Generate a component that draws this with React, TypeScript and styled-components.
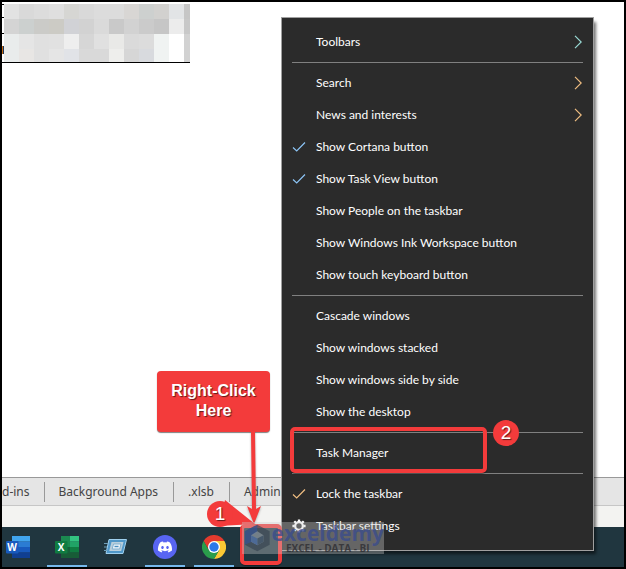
import React from "react";
import styled, { createGlobalStyle } from "styled-components";

const GlobalStyle = createGlobalStyle`
  *, *::before, *::after { box-sizing: border-box; }
  body { margin: 0; font-family: "Noto Sans", "Open Sans", sans-serif; background: #000; }
  button { font: inherit; color: inherit; border: 0; background: none; padding: 0; margin: 0; cursor: default; }
`;

const RED = "#f33b3b";

const Screen = styled.div`
  position: relative;
  display: flex;
  flex-direction: column;
  min-height: 100vh;
  border: 2px solid #000;
  background: #fff;
  overflow: hidden;
`;

const Sheet = styled.main`
  flex: 1;
  padding: 2px 0 0 0;
`;

const Cells = styled.div`
  display: flex;
  align-items: flex-end;
  width: 188px;
  border-bottom: 1px solid #000;
`;

const RowEdge = styled.div`
  width: 2px;
  height: 58px;
  padding-top: 42px;
  background: linear-gradient(#000, #000) 0 0 / 2px 1px no-repeat,
    linear-gradient(#000, #000) 0 13px / 2px 1px no-repeat,
    linear-gradient(#000, #000) 0 29px / 2px 1px no-repeat, #fff;
`;

const CellMark = styled.div`
  height: 8px;
  background: #c56a12;
  border-right: 1px solid #1d3557;
`;

const Mosaic = styled.div`
  display: grid;
  grid-template-columns: repeat(12, 15px) 6px;
  grid-template-rows: 15px 15px 15px 13px;
`;

const Pixel = styled.span<{ $tone: string }>`
  background: ${(p) => p.$tone};
`;

const SheetTabs = styled.nav`
  display: flex;
  align-items: center;
  height: 29px;
  border-top: 1px solid #999;
  border-bottom: 1px solid #c6c6c6;
  background: #e5e5e5;
  overflow: hidden;
`;

const SheetTab = styled.button<{ $cut?: boolean }>`
  height: 20px;
  padding: ${(p) => (p.$cut ? "0 14px 0 0" : "0 15px 0 14px")};
  border-right: 1px solid #999;
  color: #444;
  font-size: 12px;
  line-height: 16px;
  white-space: nowrap;
`;

const StatusBar = styled.div`
  height: 21px;
  background: #f3f3f1;
`;

const Taskbar = styled.footer`
  display: flex;
  gap: 1px;
  height: 40px;
  margin-left: -8px;
  background: #20363f;
`;

const TaskButton = styled.button<{ $open?: boolean }>`
  display: flex;
  align-items: center;
  justify-content: center;
  width: 48px;
  height: 40px;
  background: ${(p) =>
    p.$open ? "linear-gradient(#76b9ed, #76b9ed) 50% 100% / 40px 2px no-repeat" : "none"};
`;

const Menu = styled.div`
  position: absolute;
  left: 279px;
  bottom: 16px;
  width: 313px;
  padding: 8px 0;
  border: 1px solid #a0a0a0;
  background: #2b2b2b;
  box-shadow: 3px 4px 3px -1px rgba(0, 0, 0, 0.55);
  color: #fff;
  font-family: Lato, "Open Sans", sans-serif;
`;

const MenuItem = styled.button`
  display: grid;
  grid-template-columns: 34px 1fr 20px;
  align-items: center;
  width: 100%;
  height: 32px;
  font-size: 12px;
  line-height: 16px;
  text-align: left;
  white-space: nowrap;
`;

const IconSlot = styled.span`
  display: flex;
  padding-left: 10px;
`;

const Divider = styled.hr`
  height: 1px;
  margin: 4px 10px;
  border: 0;
  background: #808080;
`;

const Highlight = styled.div<{ $x: number; $bottom: number; $w: number; $h: number }>`
  position: absolute;
  left: ${(p) => p.$x}px;
  bottom: ${(p) => p.$bottom}px;
  width: ${(p) => p.$w}px;
  height: ${(p) => p.$h}px;
  border: 4px solid ${RED};
  border-radius: 5px;
  box-shadow: 0 1px 1px rgba(0, 0, 0, 0.4);
  pointer-events: none;
`;

const Callout = styled.div`
  position: absolute;
  left: 155px;
  bottom: 135px;
  width: 113px;
  padding: 10px 0 11px;
  border-radius: 4px;
  background: ${RED};
  box-shadow: 0 1px 1px rgba(0, 0, 0, 0.5);
  color: #fff;
  font: bold 16px/20px "Liberation Sans", Arial, sans-serif;
  text-align: center;
  text-shadow: 1px 1px 1px rgba(0, 0, 0, 0.6);
`;

const Arrow = styled.svg`
  position: absolute;
  left: 243px;
  bottom: 42px;
  filter: drop-shadow(0 1px 1px rgba(0, 0, 0, 0.3));
`;

const PinTail = styled.svg`
  position: absolute;
  left: 205px;
  bottom: 39px;
`;

const Step = styled.div<{ $x: number; $bottom: number }>`
  position: absolute;
  left: ${(p) => p.$x}px;
  bottom: ${(p) => p.$bottom}px;
  width: 26px;
  height: 26px;
  border-radius: 50%;
  background: ${RED};
  color: #fff;
  font: 19px/26px "Liberation Sans", Arial, sans-serif;
  text-align: center;
  text-shadow: 1px 1px 1px rgba(0, 0, 0, 0.6);
`;

const Watermark = styled.div`
  position: absolute;
  left: 240px;
  bottom: 13px;
  display: flex;
  align-items: center;
  width: 142px;
  height: 32px;
  padding-left: 1px;
  background: rgba(205, 205, 205, 0.36);
  pointer-events: none;
`;

const WatermarkText = styled.div`
  display: flex;
  flex-direction: column;
  align-items: center;
  flex: 1;
`;

const BrandName = styled.span`
  color: rgba(58, 76, 140, 0.8);
  font: 700 21px/20px "Open Sans", sans-serif;
`;

const BrandTag = styled.span`
  color: rgba(45, 45, 50, 0.8);
  font: 700 10px/10px "Open Sans", sans-serif;
  white-space: nowrap;
`;

const tones = [
  "#e2e2e2", "#d9d9d9", "#dcdcdc", "#dfdfdf", "#d6d6d3", "#d9d9d9", "#dcdcdc", "#dcdcdc", "#d8d6d4", "#cdd0cf", "#d2d1cf", "#e2e4e6", "#c6c6c6",
  "#d4d4d4", "#ccd0cf", "#cbcbc8", "#cccbc5", "#d1d2d6", "#d2d2d2", "#dadada", "#c9c9c9", "#d2d2d2", "#cbcbcb", "#c6c6c6", "#ececec", "#c8c8c8",
  "#e9ecec", "#e5e5e5", "#e0e0e0", "#e1e1e1", "#eeeeee", "#d6d6d6", "#e0e0e0", "#e9e9e7", "#dadada", "#dcdcdc", "#f0f3f2", "#ffffff", "#d2d2d2",
  "#e9ecec", "#e8e6e4", "#e0e0e0", "#e5e5e5", "#e1e3e7", "#d9d9d9", "#d9d9d9", "#eeeeec", "#d6d6d6", "#d8dade", "#f0f3f2", "#ffffff", "#d2d2d2",
];

const Check = ({ tint }: { tint: string }) => (
  <svg width="14" height="14" viewBox="0 0 14 14" fill="none" aria-hidden="true">
    <path d="M1 7.5 4.7 11 13 2.5" stroke={tint} strokeWidth="1.2" />
  </svg>
);

const Chevron = ({ tint }: { tint: string }) => (
  <svg width="9" height="14" viewBox="0 0 9 14" fill="none" aria-hidden="true">
    <path d="M2 .8 8.200 7 2 13.200" stroke={tint} strokeWidth="1.2" />
  </svg>
);

const Gear = () => (
  <svg width="14" height="14" viewBox="0 0 14 14" fill="none" stroke="#fff" aria-hidden="true">
    <circle cx="7" cy="7" r="3.800" strokeWidth="2.2" />
    <path
      d="M7 .4v2.400M7 11.200v2.400M.4 7h2.400M11.200 7h2.400M2.300 2.300 4 4M10 10l1.700 1.700M2.300 11.700 4 10M10 4l1.700-1.700"
      strokeWidth="2.300"
    />
  </svg>
);

const OfficeIcon = ({ letter, bands, tile }: { letter: string; bands: string[]; tile: string }) => (
  <svg width="24" height="22" viewBox="0 0 24 22" aria-hidden="true">
    {bands.map((c, i) => (
      <rect key={c} x="6" y={i * 5.5} width="18" height="5.6" fill={c} />
    ))}
    {letter === "X" && <path d="M6 0h9v5.5H6zM6 5.5h9V11H6z" fill="#1b8a50" />}
    {letter === "X" && <path d="M6 11h9v5.5H6z" fill="#14623a" />}
    <rect y="5" width="12.5" height="12.5" rx="1" fill={tile} />
    <text
      x="6.2"
      y="15"
      fill="#fff"
      fontFamily="Open Sans, sans-serif"
      fontSize="10"
      fontWeight="700"
      textAnchor="middle"
    >
      {letter}
    </text>
  </svg>
);

const RunIcon = () => (
  <svg width="24" height="18" viewBox="0 0 24 18" fill="none" aria-hidden="true">
    <path d="M5 1.500H22.500l-3.500 14H2z" fill="#4f97c8" stroke="#9fd0ee" />
    <path d="M7.500 4h12l-2.300 9h-12z" fill="#b9cfdc" />
    <path d="M9.500 6h7.500l-1.300 5H8.200z" fill="#eef6fb" stroke="#7fb0d0" />
    <path d="M10.500 8.500h4" stroke="#4a8fbe" strokeWidth="1.400" />
    <path d="M0 5.500h4M0 9h3M0 12.500h3" stroke="#6f9fb8" />
  </svg>
);

const DiscordIcon = () => (
  <svg width="24" height="24" viewBox="0 0 24 24" aria-hidden="true">
    <circle cx="12" cy="12" r="12" fill="#5865f2" />
    <path
      d="M16.9 7.4A12 12 0 0 0 14 6.5l-.5.9a11 11 0 0 0-3 0L10 6.5a12 12 0 0 0-2.9.9C5.2 10.200 4.700 12.900 5 15.600a11 11 0 0 0 3.500 1.800l.8-1.300-1.200-.6.3-.2a8.600 8.600 0 0 0 7.200 0l.3.2-1.200.6.8 1.300a11 11 0 0 0 3.500-1.800c.3-3.100-.5-5.800-2.100-8.200ZM9.500 13.900c-.8 0-1.300-.7-1.300-1.500s.6-1.500 1.300-1.500 1.400.7 1.300 1.500c0 .8-.6 1.500-1.300 1.500Zm5 0c-.7 0-1.300-.7-1.300-1.500s.6-1.500 1.300-1.500 1.400.7 1.300 1.500c0 .8-.6 1.500-1.300 1.500Z"
      fill="#fff"
    />
  </svg>
);

const ChromeIcon = () => (
  <svg width="24" height="24" viewBox="0 0 24 24" aria-hidden="true">
    <path d="M12 6h10.400A12 12 0 0 0 1.600 6l5.200 9z" fill="#e33b2e" />
    <path d="M17.200 15 12 24A12 12 0 0 0 22.400 6H12z" fill="#fcc934" />
    <path d="M6.800 15 1.600 6A12 12 0 0 0 12 24l5.200-9z" fill="#2a9d4b" />
    <circle cx="12" cy="12" r="6" fill="#fff" />
    <circle cx="12" cy="12" r="4.700" fill="#2b78e8" />
  </svg>
);

const CubeLogo = () => (
  <svg width="30" height="30" viewBox="0 0 30 30" aria-hidden="true">
    <path d="M15 1 28 8v14l-13 7-13-7V8z" fill="#34424e" opacity=".65" />
    <path d="M2 8 15 1v8l-6 4v6l-7 3z" fill="#35559a" opacity=".65" />
    <path d="m15 8 6.500 4v7L15 22.500 8.500 19v-7z" fill="#7f8b93" opacity=".8" />
    <path d="m15 15.500 6.500-3.500v7L15 22.500z" fill="#46586a" />
    <path d="m8.500 12 6.500 3.500v7L8.500 19z" fill="#4d6a96" />
  </svg>
);

type Entry = { label: string; mark?: "check" | "gear"; sub?: boolean; tint?: string };

const BLUE = "#8cc4f5";
const TEAL = "#9adbd6";
const AMBER = "#f0be82";

const groups: Entry[][] = [
  [{ label: "Toolbars", sub: true, tint: TEAL }],
  [
    { label: "Search", sub: true, tint: AMBER },
    { label: "News and interests", sub: true, tint: AMBER },
    { label: "Show Cortana button", mark: "check", tint: BLUE },
    { label: "Show Task View button", mark: "check", tint: BLUE },
    { label: "Show People on the taskbar" },
    { label: "Show Windows Ink Workspace button" },
    { label: "Show touch keyboard button" },
  ],
  [
    { label: "Cascade windows" },
    { label: "Show windows stacked" },
    { label: "Show windows side by side" },
    { label: "Show the desktop" },
  ],
  [{ label: "Task Manager" }],
  [
    { label: "Lock the taskbar", mark: "check", tint: AMBER },
    { label: "Taskbar settings", mark: "gear" },
  ],
];

export default function App() {
  return (
    <Screen>
      <GlobalStyle />
      <Sheet>
        <Cells>
          <RowEdge>
            <CellMark />
          </RowEdge>
          <Mosaic>
            {tones.map((t, i) => (
              <Pixel key={i} $tone={t} />
            ))}
          </Mosaic>
        </Cells>
      </Sheet>
      <SheetTabs>
        <SheetTab $cut>d-ins</SheetTab>
        <SheetTab>Background Apps</SheetTab>
        <SheetTab>.xlsb</SheetTab>
        <SheetTab>Admin</SheetTab>
      </SheetTabs>
      <StatusBar />
      <Taskbar>
        <TaskButton aria-label="Word">
          <OfficeIcon letter="W" tile="#185abd" bands={["#41a5ee", "#2b7cd3", "#185abd", "#103f91"]} />
        </TaskButton>
        <TaskButton aria-label="Excel" $open>
          <OfficeIcon letter="X" tile="#107c41" bands={["#33c481", "#21a366", "#107c41", "#185c37"]} />
        </TaskButton>
        <TaskButton aria-label="Run">
          <RunIcon />
        </TaskButton>
        <TaskButton aria-label="Discord" $open>
          <DiscordIcon />
        </TaskButton>
        <TaskButton aria-label="Chrome" $open>
          <ChromeIcon />
        </TaskButton>
      </Taskbar>

      <Menu role="menu">
        {groups.map((group, g) => (
          <React.Fragment key={g}>
            {g > 0 && <Divider />}
            {group.map((entry) => (
              <MenuItem key={entry.label} role="menuitem">
                <IconSlot>
                  {entry.mark === "check" && <Check tint={entry.tint ?? BLUE} />}
                  {entry.mark === "gear" && <Gear />}
                </IconSlot>
                <span>{entry.label}</span>
                {entry.sub && <Chevron tint={entry.tint ?? AMBER} />}
              </MenuItem>
            ))}
          </React.Fragment>
        ))}
      </Menu>

      <Highlight $x={288} $bottom={94} $w={197} $h={46} />
      <Highlight $x={238} $bottom={2} $w={42} $h={41} />
      <Callout>
        Right-Click
        <br />
        Here
      </Callout>
      <PinTail width="50" height="30" viewBox="0 0 50 30" aria-hidden="true">
        <path d="M18 2 48 26 12 28z" fill={RED} />
      </PinTail>
      <Step $x={205} $bottom={40}>1</Step>
      <Arrow width="20" height="94" viewBox="0 0 20 94" aria-hidden="true">
        <path d="M6 0h4l1 78 5-3L9 93 2 75l5 3z" fill={RED} />
      </Arrow>
      <Step $x={491} $bottom={121}>2</Step>
      <Watermark>
        <CubeLogo />
        <WatermarkText>
          <BrandName>exceldemy</BrandName>
          <BrandTag>EXCEL - DATA - BI</BrandTag>
        </WatermarkText>
      </Watermark>
    </Screen>
  );
}
